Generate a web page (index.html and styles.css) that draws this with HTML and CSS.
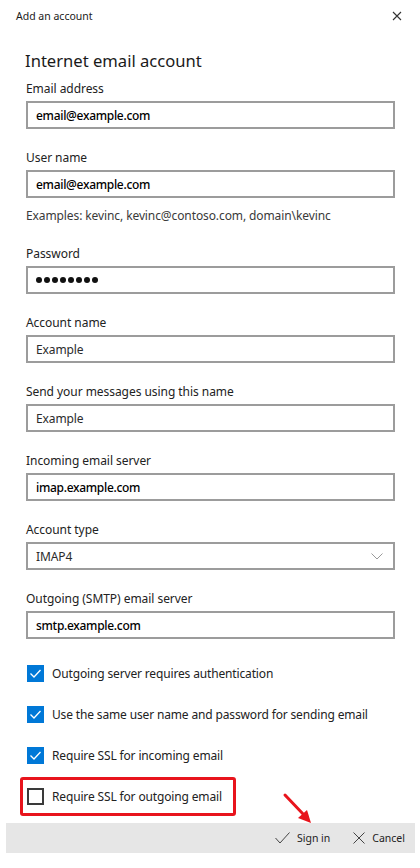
FILE: index.html
```html
<!DOCTYPE html>
<html lang="en">
<head>
<meta charset="utf-8">
<title>Add an account</title>
<link rel="stylesheet" href="styles.css">
</head>
<body>
<div class="window">
  <header class="titlebar">
    <span class="title">Add an account</span>
    <svg class="close" width="10" height="10" viewBox="0 0 10 10" aria-label="Close">
      <path d="M1 1 L9 9 M9 1 L1 9" stroke="#333" stroke-width="1.1" fill="none"/>
    </svg>
  </header>

  <main class="content">
    <h1 class="heading">Internet email account</h1>

    <div class="field">
      <div class="label">Email address</div>
      <div class="box value-strong">email@example.com</div>
    </div>

    <div class="field">
      <div class="label">User name</div>
      <div class="box value-strong">email@example.com</div>
      <div class="hint">Examples: kevinc, kevinc@contoso.com, domain\kevinc</div>
    </div>

    <div class="field">
      <div class="label">Password</div>
      <div class="box">
        <span class="dots" aria-label="password">
          <i class="dot"></i><i class="dot"></i><i class="dot"></i><i class="dot"></i><i class="dot"></i><i class="dot"></i><i class="dot"></i><i class="dot"></i>
        </span>
      </div>
    </div>

    <div class="field">
      <div class="label">Account name</div>
      <div class="box">Example</div>
    </div>

    <div class="field">
      <div class="label">Send your messages using this name</div>
      <div class="box">Example</div>
    </div>

    <div class="field">
      <div class="label">Incoming email server</div>
      <div class="box value-strong">imap.example.com</div>
    </div>

    <div class="field">
      <div class="label">Account type</div>
      <div class="box select">
        <span>IMAP4</span>
        <svg class="chevron" width="12" height="7" viewBox="0 0 12 7">
          <path d="M0.5 0.5 L6 6 L11.5 0.5" stroke="#9a9a9a" stroke-width="1" fill="none"/>
        </svg>
      </div>
    </div>

    <div class="field">
      <div class="label">Outgoing (SMTP) email server</div>
      <div class="box value-strong">smtp.example.com</div>
    </div>

    <div class="checks">
      <div class="check-row">
        <span class="checkbox checked">
          <svg width="17" height="17" viewBox="0 0 17 17"><path d="M3.5 8.5 L7 12 L13.5 5" stroke="#fff" stroke-width="1.3" fill="none"/></svg>
        </span>
        <span class="check-text">Outgoing server requires authentication</span>
      </div>
      <div class="check-row">
        <span class="checkbox checked">
          <svg width="17" height="17" viewBox="0 0 17 17"><path d="M3.5 8.5 L7 12 L13.5 5" stroke="#fff" stroke-width="1.3" fill="none"/></svg>
        </span>
        <span class="check-text">Use the same user name and password for sending email</span>
      </div>
      <div class="check-row">
        <span class="checkbox checked">
          <svg width="17" height="17" viewBox="0 0 17 17"><path d="M3.5 8.5 L7 12 L13.5 5" stroke="#fff" stroke-width="1.3" fill="none"/></svg>
        </span>
        <span class="check-text">Require SSL for incoming email</span>
      </div>
      <div class="highlight">
        <div class="check-row inner">
          <span class="checkbox"></span>
          <span class="check-text">Require SSL for outgoing email</span>
        </div>
      </div>
    </div>
  </main>

  <footer class="bar">
    <span class="action">
      <svg width="15" height="12" viewBox="0 0 15 12"><path d="M0.5 6 L5 11 L14.5 0.5" stroke="#444" stroke-width="1" fill="none"/></svg>
      <span>Sign in</span>
    </span>
    <span class="action">
      <svg width="12" height="12" viewBox="0 0 12 12"><path d="M0.5 0.5 L11.5 11.5 M11.5 0.5 L0.5 11.5" stroke="#444" stroke-width="1" fill="none"/></svg>
      <span>Cancel</span>
    </span>
  </footer>
</div>

<svg class="arrow" width="40" height="40" viewBox="0 0 40 40" aria-hidden="true">
  <path d="M5 5 L24 25" stroke="#e8141c" stroke-width="3" stroke-linecap="round" fill="none"/>
  <path d="M31 33 L18 28 L27 20 Z" fill="#e8141c"/>
</svg>
</body>
</html>
```
FILE: styles.css
```css
* { box-sizing: border-box; }

html, body {
  margin: 0;
  padding: 0;
  background: #ffffff;
}

body {
  font-family: "Noto Sans", "Open Sans", sans-serif;
  color: #1f1f1f;
  width: 420px;
  height: 868px;
  position: relative;
  overflow: hidden;
}

.window {
  margin-left: 6px;
  width: 409px;
}

.titlebar {
  height: 32px;
  display: flex;
  align-items: center;
  justify-content: space-between;
  padding: 0 13px 0 10px;
}

.title {
  font-size: 10.5px;
  color: #1a1a1a;
}

.close { display: block; }

.content {
  padding: 0 20px;
}

.heading {
  margin: 17px 0 0 -1px;
  font-size: 16.6px;
  line-height: 24px;
  font-weight: 400;
  color: #1a1a1a;
}

.field {
  margin-top: 20px;
}

.field:first-of-type {
  margin-top: 7px;
}

.label {
  font-size: 12px;
  letter-spacing: -0.05px;
  line-height: 18px;
  color: #222;
}

.box {
  margin-top: 3px;
  height: 28px;
  border: 2px solid #9c9c9c;
  display: flex;
  align-items: center;
  padding: 0 8px;
  font-size: 12px;
  letter-spacing: -0.1px;
  color: #2b2b2b;
}

.value-strong {
  color: #000;
  font-weight: 500;
  letter-spacing: -0.3px;
}

.hint {
  margin-top: 9px;
  margin-bottom: 1px;
  font-size: 12px;
  letter-spacing: -0.1px;
  line-height: 18px;
  color: #3a3a3a;
}

.dots {
  display: flex;
  gap: 2px;
}

.dot {
  width: 6px;
  height: 6px;
  border-radius: 50%;
  background: #111;
}

.select {
  justify-content: space-between;
  padding-right: 10px;
}

.chevron { display: block; }

.checks {
  margin-top: 14px;
}

.check-row {
  height: 41px;
  display: flex;
  align-items: center;
  gap: 8px;
  padding-left: 1px;
}

.checkbox {
  width: 17px;
  height: 17px;
  flex: none;
  border: 2px solid #3a3a3a;
  display: flex;
  align-items: center;
  justify-content: center;
}

.checkbox.checked {
  border: none;
  background: #0078d7;
}

.checkbox svg { display: block; }

.check-text {
  font-size: 12px;
  letter-spacing: -0.15px;
  color: #222;
  white-space: nowrap;
}

.highlight {
  margin: 1px 0 0 -6px;
  width: 216px;
  height: 39px;
  border: 3px solid #e8141c;
  border-radius: 3px;
  display: flex;
  align-items: center;
  padding-left: 4px;
}

.check-row.inner {
  height: auto;
  padding-left: 0;
}

.bar {
  margin-top: 7px;
  height: 30px;
  background: #e6e6e6;
  display: flex;
  justify-content: flex-end;
  align-items: center;
  gap: 23px;
  padding-right: 10px;
}

.action {
  display: flex;
  align-items: center;
  gap: 7px;
  font-size: 10.5px;
  color: #222;
}

.action svg { display: block; }

.arrow {
  position: absolute;
  left: 280px;
  top: 790px;
}
```
